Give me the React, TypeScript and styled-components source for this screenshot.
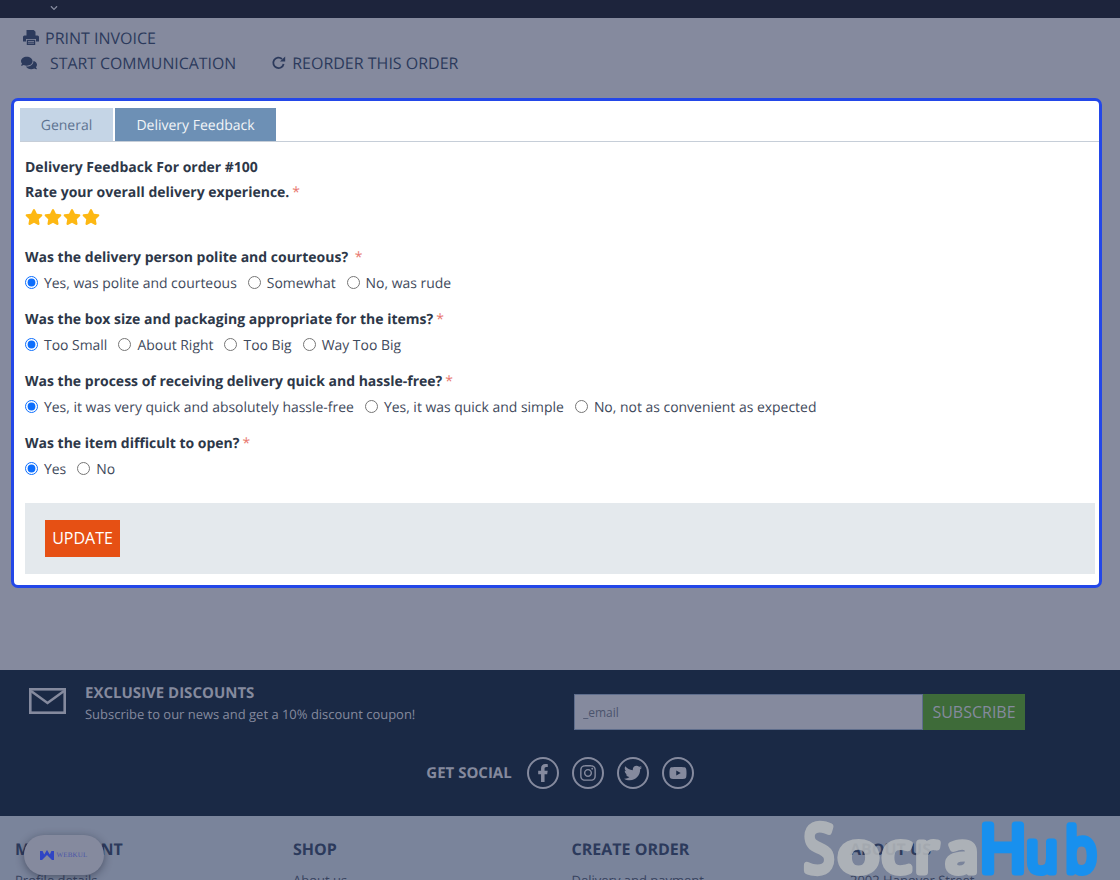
import styled, { createGlobalStyle } from "styled-components";
import { FaComments, FaStar, FaFacebookF, FaInstagram, FaTwitter, FaYoutube, FaChevronDown } from "react-icons/fa";

const GlobalStyle = createGlobalStyle`
  html, body {
    margin: 0;
    height: 880px;
    overflow: hidden;
    background: #858a9e;
    font-family: "Open Sans", "Liberation Sans", sans-serif;
    text-rendering: geometricPrecision;
  }
  * { box-sizing: border-box; }
`;

const Page = styled.div`
  position: relative;
  width: 1120px;
  height: 880px;
  overflow: hidden;
`;

const TopBar = styled.div`
  height: 18px;
  background: #1d243c;
  color: #858a9e;
  padding: 4px 0 0 50px;
  font-size: 8px;
  line-height: 8px;
`;

const Actions = styled.div`
  height: 80px;
  padding: 7px 0 0 21px;
  color: #2c3a5c;
  font-size: 16px;
`;

const ActionRow = styled.div`
  display: flex;
  align-items: center;
  height: 25px;
`;

const ActionLink = styled.span<{ $gap: number; $left?: number; $size?: number }>`
  display: inline-flex;
  align-items: center;
  gap: ${(p) => p.$gap}px;
  margin-left: ${(p) => p.$left ?? 0}px;
  font-size: ${(p) => p.$size ?? 16}px;
  svg { font-size: 16px; flex: none; }
`;

const Card = styled.div`
  margin: 0 18px 0 11px;
  height: 490px;
  background: #fff;
  border: 3px solid #2347e8;
  border-radius: 7px;
  padding: 7px 0 0 6px;
`;

const Tabs = styled.div`
  display: flex;
  gap: 2px;
  height: 34px;
  border-bottom: 1px solid #c6ced8;
`;

const Tab = styled.div<{ $active?: boolean; $width: number }>`
  width: ${(p) => p.$width}px;
  height: 33px;
  padding-top: 1px;
  display: flex;
  align-items: center;
  justify-content: center;
  font-size: 14px;
  background: ${(p) => (p.$active ? "#6d90b5" : "#c5d5e6")};
  color: ${(p) => (p.$active ? "#f2f5f8" : "#5d7391")};
`;

const Form = styled.div`
  padding: 13px 0 0 5px;
  color: #2d3748;
  font-size: 13.95px;
`;

const Title = styled.div`
  font-size: 14px;
  font-weight: 700;
  line-height: 25px;
  height: 25px;
`;

const Required = styled.span`
  color: #e8786f;
  font-weight: 400;
  margin-left: 3px;
`;

const Stars = styled.div`
  display: flex;
  gap: 1px;
  height: 40px;
  padding-top: 3px;
  color: #fdb813;
  font-size: 18px;
`;

const Question = styled.div`
  height: 62px;
`;

const RadioRow = styled.div`
  display: flex;
  align-items: center;
  gap: 11px;
  height: 25px;
`;

const RadioLabel = styled.label`
  display: inline-flex;
  align-items: center;
  gap: 6px;
  color: #3f4a5c;
`;

const OptionText = styled.span`
  margin-top: 2px;
`;

const RadioInput = styled.input`
  margin: 0;
  width: 13px;
  height: 13px;
  accent-color: #0d6efd;
`;

const ButtonBar = styled.div`
  margin-top: 10px;
  width: 1070px;
  height: 71px;
  background: #e4e9ed;
  padding: 17px 20px;
`;

const UpdateButton = styled.button`
  width: 75px;
  height: 37px;
  border: 0;
  padding: 0 0 1px;
  background: #e65014;
  color: #fff;
  font-family: inherit;
  font-size: 16px;
`;

const Newsletter = styled.div`
  margin-top: 82px;
  height: 146px;
  background: #1a2945;
  color: #858a9e;
  padding: 13px 0 0 29px;
`;

const NewsTop = styled.div`
  display: flex;
  height: 79px;
`;

const MailIcon = styled.svg`
  width: 37px;
  height: 26px;
  margin-top: 5px;
  flex: none;
`;

const NewsText = styled.div`
  width: 489px;
  margin-left: 19px;
  font-size: 12.97px;
`;

const NewsTitle = styled.div`
  font-weight: 700;
  font-size: 15px;
  line-height: 20px;
`;

const NewsSub = styled.div`
  line-height: 23px;
`;

const Subscribe = styled.div`
  display: flex;
  margin-top: 11px;
  height: 36px;
`;

const EmailInput = styled.input`
  width: 349px;
  height: 36px;
  background: #858a9e;
  border: 1px solid #5e6d8c;
  padding: 0 8px;
  font-family: inherit;
  font-size: 12px;
  &::placeholder { color: #4b546d; opacity: 1; }
`;

const SubscribeButton = styled.button`
  width: 102px;
  height: 36px;
  border: 0;
  background: #3e6b39;
  color: #858a9e;
  font-family: inherit;
  font-size: 16px;
`;

const Social = styled.div`
  display: flex;
  align-items: center;
  justify-content: center;
  gap: 13px;
  padding-right: 29px;
  margin-top: -5px;
`;

const SocialLabel = styled.span`
  font-weight: 700;
  font-size: 15px;
  margin-right: 2px;
`;

const SocialIcon = styled.span`
  width: 32px;
  height: 32px;
  border: 2px solid #858a9e;
  border-radius: 50%;
  display: flex;
  align-items: center;
  justify-content: center;
  font-size: 18px;
`;

const LinksFooter = styled.div`
  height: 64px;
  background: #7a849b;
  padding: 22px 0 0 15px;
  display: grid;
  grid-template-columns: 278px 278.5px 278.5px 1fr;
  color: #2c3a5c;
`;

const ColTitle = styled.div`
  font-weight: 700;
  font-size: 16px;
  line-height: 22px;
`;

const ColLink = styled.div`
  font-size: 13px;
  line-height: 20px;
  margin-top: 10px;
  color: #38435f;
`;

const WebkulPill = styled.div`
  position: absolute;
  left: 24px;
  top: 835px;
  width: 80px;
  height: 40px;
  border-radius: 20px;
  background: #858a9e;
  box-shadow: 0 2px 8px rgba(20, 25, 45, 0.45);
  display: flex;
  align-items: center;
  justify-content: center;
  gap: 2px;
`;

const WebkulText = styled.span`
  font-family: "Liberation Serif", serif;
  font-size: 7px;
  letter-spacing: 0.2px;
  color: #4a55a8;
`;

const Watermark = styled.svg`
  position: absolute;
  left: 795px;
  top: 810px;
  width: 320px;
  height: 70px;
  font-family: "Open Sans", sans-serif;
`;

const WatermarkGroup = styled.g<{ $color: string; $fade?: number }>`
  fill: ${(p) => p.$color};
  stroke: ${(p) => p.$color};
  opacity: ${(p) => p.$fade ?? 1};
`;

const WatermarkLetter = styled.text<{ $size: number }>`
  font-size: ${(p) => p.$size}px;
  stroke-width: 7px;
  stroke-linejoin: round;
  stroke-linecap: round;
`;

const questions = [
  { label: "Was the delivery person polite and courteous? ", options: ["Yes, was polite and courteous", "Somewhat", "No, was rude"] },
  { label: "Was the box size and packaging appropriate for the items?", options: ["Too Small", "About Right", "Too Big", "Way Too Big"] },
  { label: "Was the process of receiving delivery quick and hassle-free?", options: ["Yes, it was very quick and absolutely hassle-free", "Yes, it was quick and simple", "No, not as convenient as expected"] },
  { label: "Was the item difficult to open?", options: ["Yes", "No"] },
];

const columns = [
  { title: "MY ACCOUNT", link: "Profile details" },
  { title: "SHOP", link: "About us" },
  { title: "CREATE ORDER", link: "Delivery and payment" },
  { title: "ABOUT US", link: "2002 Hanover Street" },
];

const socraLetters = [
  { ch: "S", x: 9, size: 66, len: 30 },
  { ch: "o", x: 43, size: 54, len: 41 },
  { ch: "c", x: 87, size: 54, len: 29 },
  { ch: "r", x: 120, size: 54, len: 23 },
  { ch: "a", x: 151, size: 54, len: 32 },
];

const hubLetters = [
  { ch: "H", x: 184, size: 66, len: 48 },
  { ch: "u", x: 231, size: 56, len: 32 },
  { ch: "b", x: 270, size: 61, len: 32 },
];

const PrintIcon = () => (
  <svg width="16" height="15" viewBox="0 0 16 15" fill="#2c3a5c">
    <path d="M3.5 0h7.2L12.5 1.8V6h-9z" />
    <path d="M1.5 5.5h13A1.5 1.5 0 0 1 16 7v4.5h-3V9H3v2.5H0V7a1.5 1.5 0 0 1 1.5-1.5z" />
    <path d="M3.8 9.8h8.4V15H3.8z" />
    <path d="M5 11.2h6v.8H5zM5 12.8h6v.8H5z" fill="#858a9e" />
  </svg>
);

const ReorderIcon = () => (
  <svg width="15" height="15" viewBox="0 0 15 15" fill="none" stroke="#2c3a5c" strokeWidth="1.8">
    <path d="M11 4A5.2 5.2 0 1 0 12.6 9" />
    <path d="M9 6.6h5.2V1.6z" fill="#2c3a5c" stroke="none" />
  </svg>
);

const App = () => {
  return (
    <Page>
      <GlobalStyle />
      <TopBar>
        <FaChevronDown />
      </TopBar>
      <Actions>
        <ActionRow>
          <ActionLink $gap={6} $left={2}>
            <PrintIcon /> PRINT INVOICE
          </ActionLink>
        </ActionRow>
        <ActionRow>
          <ActionLink $gap={13} $size={15.85}>
            <FaComments /> START COMMUNICATION
          </ActionLink>
          <ActionLink $gap={6} $left={35}>
            <ReorderIcon /> REORDER THIS ORDER
          </ActionLink>
        </ActionRow>
      </Actions>

      <Card>
        <Tabs>
          <Tab $width={93}>General</Tab>
          <Tab $width={161} $active>Delivery Feedback</Tab>
        </Tabs>
        <Form>
          <Title>Delivery Feedback For order #100</Title>
          <Title>
            Rate your overall delivery experience.<Required>*</Required>
          </Title>
          <Stars>
            <FaStar /><FaStar /><FaStar /><FaStar />
          </Stars>
          {questions.map((q, i) => (
            <Question key={i}>
              <Title>
                {q.label}<Required>*</Required>
              </Title>
              <RadioRow>
                {q.options.map((o, j) => (
                  <RadioLabel key={o}>
                    <RadioInput type="radio" name={`q${i}`} defaultChecked={j === 0} />
                    <OptionText>{o}</OptionText>
                  </RadioLabel>
                ))}
              </RadioRow>
            </Question>
          ))}
          <ButtonBar>
            <UpdateButton>UPDATE</UpdateButton>
          </ButtonBar>
        </Form>
      </Card>

      <Newsletter>
        <NewsTop>
          <MailIcon viewBox="0 0 37 26" fill="none" stroke="#858a9e" strokeWidth="2.6">
            <rect x="1.3" y="1.3" width="34.4" height="23.4" />
            <path d="M2 3l16.5 12L35 3" />
          </MailIcon>
          <NewsText>
            <NewsTitle>EXCLUSIVE DISCOUNTS</NewsTitle>
            <NewsSub>Subscribe to our news and get a 10% discount coupon!</NewsSub>
          </NewsText>
          <Subscribe>
            <EmailInput placeholder="_email" />
            <SubscribeButton>SUBSCRIBE</SubscribeButton>
          </Subscribe>
        </NewsTop>
        <Social>
          <SocialLabel>GET SOCIAL</SocialLabel>
          <SocialIcon><FaFacebookF /></SocialIcon>
          <SocialIcon><FaInstagram /></SocialIcon>
          <SocialIcon><FaTwitter /></SocialIcon>
          <SocialIcon><FaYoutube /></SocialIcon>
        </Social>
      </Newsletter>

      <LinksFooter>
        {columns.map((c) => (
          <div key={c.title}>
            <ColTitle>{c.title}</ColTitle>
            <ColLink>{c.link}</ColLink>
          </div>
        ))}
      </LinksFooter>

      <WebkulPill>
        <svg width="14" height="10" viewBox="0 0 14 10" fill="#2f45c4">
          <path d="M0 1h2.6l1.6 3.4L7 0l2.8 4.4L11.4 1H14v9h-2L7 5 2 10H0z" />
        </svg>
        <WebkulText>WEBKUL</WebkulText>
      </WebkulPill>
      <Watermark viewBox="0 0 320 70">
        <WatermarkGroup $color="#b4b8bb" $fade={0.88}>
          {socraLetters.map((l) => (
            <WatermarkLetter key={l.ch} x={l.x} y={62} $size={l.size} textLength={l.len} lengthAdjust="spacingAndGlyphs">
              {l.ch}
            </WatermarkLetter>
          ))}
        </WatermarkGroup>
        <WatermarkGroup $color="#1890ee">
          {hubLetters.map((l) => (
            <WatermarkLetter key={l.ch} x={l.x} y={62} $size={l.size} textLength={l.len} lengthAdjust="spacingAndGlyphs">
              {l.ch}
            </WatermarkLetter>
          ))}
        </WatermarkGroup>
      </Watermark>
    </Page>
  );
};

export default App;
